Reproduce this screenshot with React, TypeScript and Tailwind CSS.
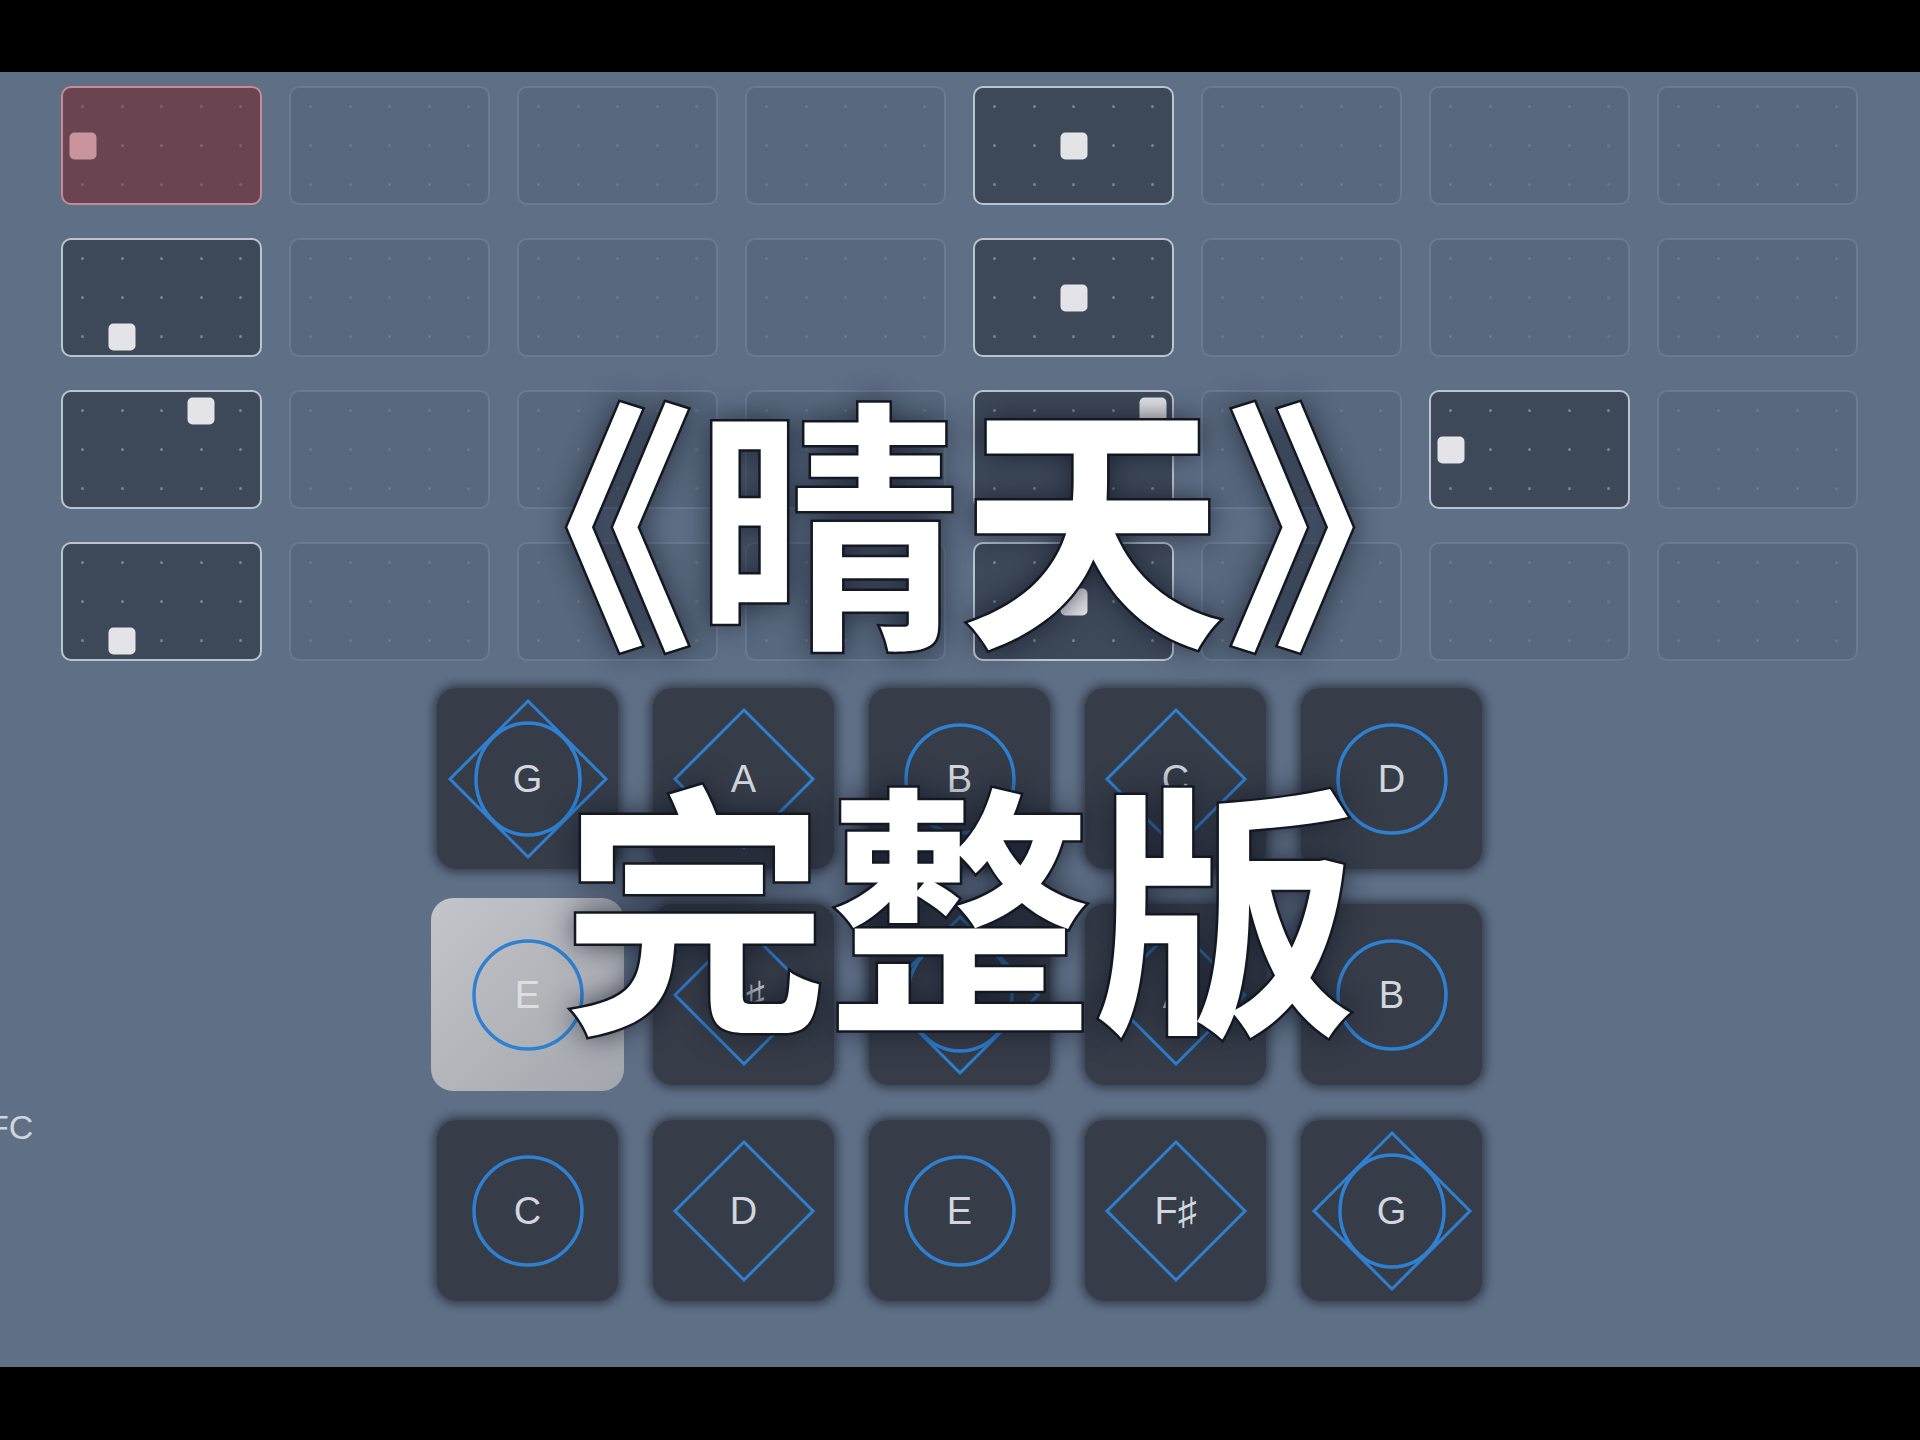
import React from "react";

type Kind = "empty" | "active" | "red";
type Cell = { kind: Kind; sq?: [number, number] };

const E: Cell = { kind: "empty" };

// 4 rows x 8 columns of clip slots
const clips: Cell[][] = [
  [{ kind: "red", sq: [0, 1] }, E, E, E, { kind: "active", sq: [2, 1] }, E, E, E],
  [{ kind: "active", sq: [1, 2] }, E, E, E, { kind: "active", sq: [2, 1] }, E, E, E],
  [{ kind: "active", sq: [3, 0] }, E, E, E, { kind: "active", sq: [4, 0] }, E, { kind: "active", sq: [0, 1] }, E],
  [{ kind: "active", sq: [1, 2] }, E, E, E, { kind: "active", sq: [2, 1] }, E, E, E],
];

const cardStyle: Record<Kind, string> = {
  empty: "bg-[#58687e] border-[#6b7b92]",
  active: "bg-[#3d4858] border-[#bcc4d0]",
  red: "bg-[#6a4450] border-[#c68b93]",
};

const dotStyle: Record<Kind, string> = {
  empty: "bg-[#6a7a90]",
  active: "bg-[#7d8696]",
  red: "bg-[#8c606b]",
};

const ClipCard: React.FC<{ cell: Cell }> = ({ cell }) => {
  const { kind, sq } = cell;
  return (
    <div className={`h-[119px] rounded-[10px] border-2 px-[18px] py-[17px] ${cardStyle[kind]}`}>
      <div className="flex flex-col justify-between h-full">
        {[0, 1, 2].map((r) => (
          <div key={r} className="flex justify-between">
            {[0, 1, 2, 3, 4].map((c) => (
              <div key={c} className={`relative w-[3px] h-[3px] rounded-full ${dotStyle[kind]}`}>
                {sq && sq[0] === c && sq[1] === r && (
                  <div
                    className={`absolute left-1/2 top-1/2 -translate-x-1/2 -translate-y-1/2 w-[27px] h-[27px] rounded-[5px] ${
                      kind === "red" ? "bg-[#c9949b]" : "bg-[#e4e4e8]"
                    }`}
                  />
                )}
              </div>
            ))}
          </div>
        ))}
      </div>
    </div>
  );
};

type Shape = "circle" | "diamond" | "both";
type Pad = { note: string; shape: Shape; lit?: boolean };

const pads: Pad[] = [
  { note: "G", shape: "both" },
  { note: "A", shape: "diamond" },
  { note: "B", shape: "circle" },
  { note: "C", shape: "diamond" },
  { note: "D", shape: "circle" },
  { note: "E", shape: "circle", lit: true },
  { note: "F♯", shape: "diamond" },
  { note: "G", shape: "both" },
  { note: "A", shape: "diamond" },
  { note: "B", shape: "circle" },
  { note: "C", shape: "circle" },
  { note: "D", shape: "diamond" },
  { note: "E", shape: "circle" },
  { note: "F♯", shape: "diamond" },
  { note: "G", shape: "both" },
];

const blue = "#2f80d1";

const PadShape: React.FC<{ shape: Shape }> = ({ shape }) => (
  <svg width="181" height="181" viewBox="0 0 181 181" className="absolute left-1/2 top-1/2 -translate-x-1/2 -translate-y-1/2">
    {shape === "circle" && <circle cx="90.5" cy="90.5" r="54" fill="none" stroke={blue} strokeWidth="3.5" />}
    {shape === "diamond" && (
      <polygon points="90.5,21.5 159.5,90.5 90.5,159.5 21.5,90.5" fill="none" stroke={blue} strokeWidth="3" strokeLinejoin="miter" />
    )}
    {shape === "both" && (
      <>
        <polygon points="90.5,12.5 168.5,90.5 90.5,168.5 12.5,90.5" fill="none" stroke={blue} strokeWidth="3" />
        <ellipse cx="90.5" cy="90.5" rx="52" ry="56" fill="none" stroke={blue} strokeWidth="3.5" />
      </>
    )}
  </svg>
);

const NotePad: React.FC<{ pad: Pad }> = ({ pad }) => {
  if (pad.lit) {
    return (
      <div className="relative -m-[6px] w-[193px] h-[193px] rounded-[22px] bg-gradient-to-br from-[#c3c5ca] to-[#a3a6ac] flex items-center justify-center">
        <PadShape shape={pad.shape} />
        <span className="relative text-[38px] font-light leading-none text-[#dcdee2] font-['Liberation_Sans',sans-serif]">
          {pad.note}
        </span>
      </div>
    );
  }
  return (
    <div className="relative w-[181px] h-[181px] rounded-[20px] bg-[#363c48] shadow-[0_0_9px_4px_rgba(30,36,48,0.6)] flex items-center justify-center">
      <PadShape shape={pad.shape} />
      <span className="relative text-[38px] font-light leading-none text-[#d3d7dd] font-['Liberation_Sans',sans-serif]">
        {pad.note}
      </span>
    </div>
  );
};

const titleText =
  "font-['Noto_Sans_CJK_SC',sans-serif] font-bold text-white text-[265px] leading-none whitespace-nowrap [-webkit-text-stroke:5px_#15181f] [paint-order:stroke_fill] [text-shadow:0_0_30px_rgba(20,26,40,0.85)]";

export default function App() {
  return (
    <div className="relative w-[1920px] h-[1440px] bg-black flex flex-col overflow-hidden">
      <div className="h-[72px] bg-black" />
      <main className="h-[1295px] bg-[#5f6f86] flex flex-col pt-[14px]">
        {/* clip grid */}
        <div className="ml-[61px] grid grid-cols-[repeat(8,201px)] gap-x-[27px] gap-y-[33px]">
          {clips.flat().map((cell, i) => (
            <ClipCard key={i} cell={cell} />
          ))}
        </div>

        {/* note pads */}
        <div className="flex mt-[27px]">
          <div className="w-[437px] pt-[422px]">
            <div className="-ml-[12px] text-[34px] leading-none text-[#cfd5dd] font-['Liberation_Sans',sans-serif]">FC</div>
          </div>
          <div className="grid grid-cols-[repeat(5,181px)] gap-[35px]">
            {pads.map((p, i) => (
              <NotePad key={i} pad={p} />
            ))}
          </div>
        </div>
      </main>
      <div className="flex-1 bg-black" />

      {/* title overlay */}
      <div className="absolute left-0 right-0 top-[380px] flex flex-col items-center gap-[120px] pointer-events-none">
        <div className={titleText}>《晴天》</div>
        <div className={titleText}>完整版</div>
      </div>
    </div>
  );
}
